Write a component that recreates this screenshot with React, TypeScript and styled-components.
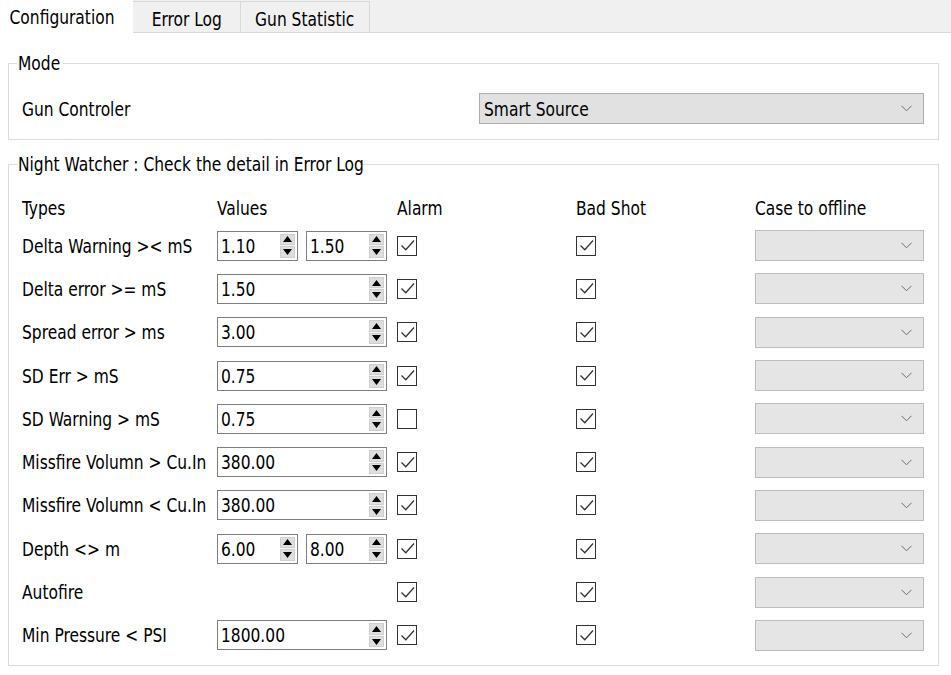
import React from "react";
import styled, { createGlobalStyle } from "styled-components";

const GlobalStyle = createGlobalStyle`
  html, body {
    margin: 0;
    padding: 0;
    background: #ffffff;
  }
  body {
    font-family: "DejaVu Sans Condensed", "DejaVu Sans", sans-serif;
    font-size: 20px;
    color: #000;
  }
`;

const Page = styled.div`
  width: 951px;
  height: 675px;
  overflow: hidden;
`;

// the reference font is narrower than anything installed, so squeeze glyphs a bit
const Txt = styled.span<{ $center?: boolean }>`
  display: inline-block;
  white-space: nowrap;
  transform: scaleX(0.86);
  transform-origin: ${({ $center }) => ($center ? "50% 50%" : "0 50%")};
`;

const TabBar = styled.div`
  display: flex;
  height: 33px;
  background: #f0f0f0;
`;

const Tab = styled.div<{ $active?: boolean; $width: number }>`
  box-sizing: border-box;
  width: ${({ $width }) => $width}px;
  display: flex;
  align-items: center;
  justify-content: center;
  background: ${({ $active }) => ($active ? "#ffffff" : "#f0f0f0")};
  border: ${({ $active }) => ($active ? "none" : "1px solid #d9d9d9")};
  margin-top: ${({ $active }) => ($active ? 0 : 1)}px;
  padding: ${({ $active }) => ($active ? "0 9px 0 0" : "4px 0 0 0")};
  & + & {
    border-left: none;
  }
`;

const TabFiller = styled.div`
  flex: 1;
  border-bottom: 1px solid #d9d9d9;
`;

const Content = styled.div`
  padding: 8px 12px 0 8px;
`;

const Group = styled.fieldset<{ $gap?: number }>`
  margin: ${({ $gap }) => $gap ?? 0}px 0 0 0;
  padding: 0;
  min-width: 0;
  border: 1px solid #dcdcdc;
`;

const Legend = styled.legend<{ $width: number }>`
  box-sizing: border-box;
  width: ${({ $width }) => $width}px;
  margin-left: 8px;
  padding: 0 1px;
  line-height: 22px;
  overflow: visible;
`;

const ModeBody = styled.div`
  display: flex;
  align-items: center;
  justify-content: space-between;
  padding: 19px 14px 15px 13px;
`;

const Label = styled.span`
  line-height: 22px;
  white-space: nowrap;
`;

const Combo = styled.div<{ $width: number; $disabled?: boolean }>`
  box-sizing: border-box;
  width: ${({ $width }) => $width}px;
  height: 31px;
  display: flex;
  align-items: center;
  justify-content: space-between;
  padding: 0 11px 0 4px;
  background: ${({ $disabled }) => ($disabled ? "#e5e5e5" : "#e1e1e1")};
  border: 1px solid ${({ $disabled }) => ($disabled ? "#bcbcbc" : "#adadad")};
`;

const WatchBody = styled.div`
  padding: 17px 14px 8px 13px;
`;

const Row = styled.div<{ $height: number }>`
  display: grid;
  grid-template-columns: 195px 180px 179px 179px 169px;
  align-items: center;
  height: ${({ $height }) => $height}px;
`;

const Values = styled.div`
  display: flex;
  gap: 8px;
`;

const SpinFrame = styled.div<{ $width: number }>`
  box-sizing: border-box;
  width: ${({ $width }) => $width}px;
  height: 30px;
  display: flex;
  align-items: stretch;
  background: #fff;
  border: 1px solid #7f7f7f;
`;

const SpinText = styled.span`
  flex: 1;
  padding-left: 3px;
  line-height: 28px;
`;

const SpinButtons = styled.div`
  width: 15px;
  margin: 2px 2px 2px 0;
  display: flex;
  flex-direction: column;
  gap: 1px;
  background: #f5f5f5;
`;

const SpinButton = styled.div`
  flex: 1;
  display: flex;
  align-items: center;
  justify-content: center;
  background: #dedede;
  border: 1px solid #cfcfcf;
`;

const CheckBox = styled.div`
  box-sizing: border-box;
  width: 20px;
  height: 20px;
  border: 1px solid #333;
  background: #fff;
  display: flex;
  align-items: center;
  justify-content: center;
`;

const Chevron = () => (
  <svg width="11" height="7" viewBox="0 0 11 7">
    <polyline points="0.5,0.8 5.5,5.8 10.5,0.8" fill="none" stroke="#6e6e6e" strokeWidth="1" />
  </svg>
);

const Tick = () => (
  <svg width="17" height="17" viewBox="0 0 17 17">
    <polyline points="2.5,8.5 6.8,12.8 15,3.5" fill="none" stroke="#333" strokeWidth="1.3" />
  </svg>
);

const Arrow = ({ up }: { up?: boolean }) => (
  <svg width="9" height="6" viewBox="0 0 9 6">
    <polygon points={up ? "0,6 4.5,0 9,6" : "0,0 4.5,6 9,0"} fill="#000" />
  </svg>
);

const Spin = ({ value, width }: { value: string; width: number }) => (
  <SpinFrame $width={width}>
    <SpinText>
      <Txt>{value}</Txt>
    </SpinText>
    <SpinButtons>
      <SpinButton>
        <Arrow up />
      </SpinButton>
      <SpinButton>
        <Arrow />
      </SpinButton>
    </SpinButtons>
  </SpinFrame>
);

interface Rule {
  type: string;
  values: string[];
  alarm: boolean;
}

const rules: Rule[] = [
  { type: "Delta Warning >< mS", values: ["1.10", "1.50"], alarm: true },
  { type: "Delta error >= mS", values: ["1.50"], alarm: true },
  { type: "Spread error > ms", values: ["3.00"], alarm: true },
  { type: "SD Err > mS", values: ["0.75"], alarm: true },
  { type: "SD Warning > mS", values: ["0.75"], alarm: false },
  { type: "Missfire Volumn > Cu.In", values: ["380.00"], alarm: true },
  { type: "Missfire Volumn < Cu.In", values: ["380.00"], alarm: true },
  { type: "Depth <> m", values: ["6.00", "8.00"], alarm: true },
  { type: "Autofire", values: [], alarm: true },
  { type: "Min Pressure < PSI", values: ["1800.00"], alarm: true },
];

const headers = ["Types", "Values", "Alarm", "Bad Shot", "Case to offline"];

export default function App() {
  return (
    <Page>
      <GlobalStyle />
      <TabBar>
        <Tab $active $width={133}>
          <Txt $center>Configuration</Txt>
        </Tab>
        <Tab $width={108}>
          <Txt $center>Error Log</Txt>
        </Tab>
        <Tab $width={129}>
          <Txt $center>Gun Statistic</Txt>
        </Tab>
        <TabFiller />
      </TabBar>
      <Content>
        <Group $gap={11}>
          <Legend $width={46}>
            <Txt>Mode</Txt>
          </Legend>
          <ModeBody>
            <Label>
              <Txt>Gun Controler</Txt>
            </Label>
            <Combo $width={445}>
              <Txt>Smart Source</Txt>
              <Chevron />
            </Combo>
          </ModeBody>
        </Group>
        <Group $gap={13}>
          <Legend $width={343}>
            <Txt>Night Watcher : Check the detail in Error Log</Txt>
          </Legend>
          <WatchBody>
            <Row $height={32}>
              {headers.map((h) => (
                <Label key={h}>
                  <Txt>{h}</Txt>
                </Label>
              ))}
            </Row>
            {rules.map((r) => (
              <Row key={r.type} $height={43.3}>
                <Label>
                  <Txt>{r.type}</Txt>
                </Label>
                <Values>
                  {r.values.map((v, i) => (
                    <Spin key={i} value={v} width={r.values.length > 1 ? 81 : 170} />
                  ))}
                </Values>
                <CheckBox>{r.alarm && <Tick />}</CheckBox>
                <CheckBox>
                  <Tick />
                </CheckBox>
                <Combo $width={169} $disabled>
                  <span />
                  <Chevron />
                </Combo>
              </Row>
            ))}
          </WatchBody>
        </Group>
      </Content>
    </Page>
  );
}
